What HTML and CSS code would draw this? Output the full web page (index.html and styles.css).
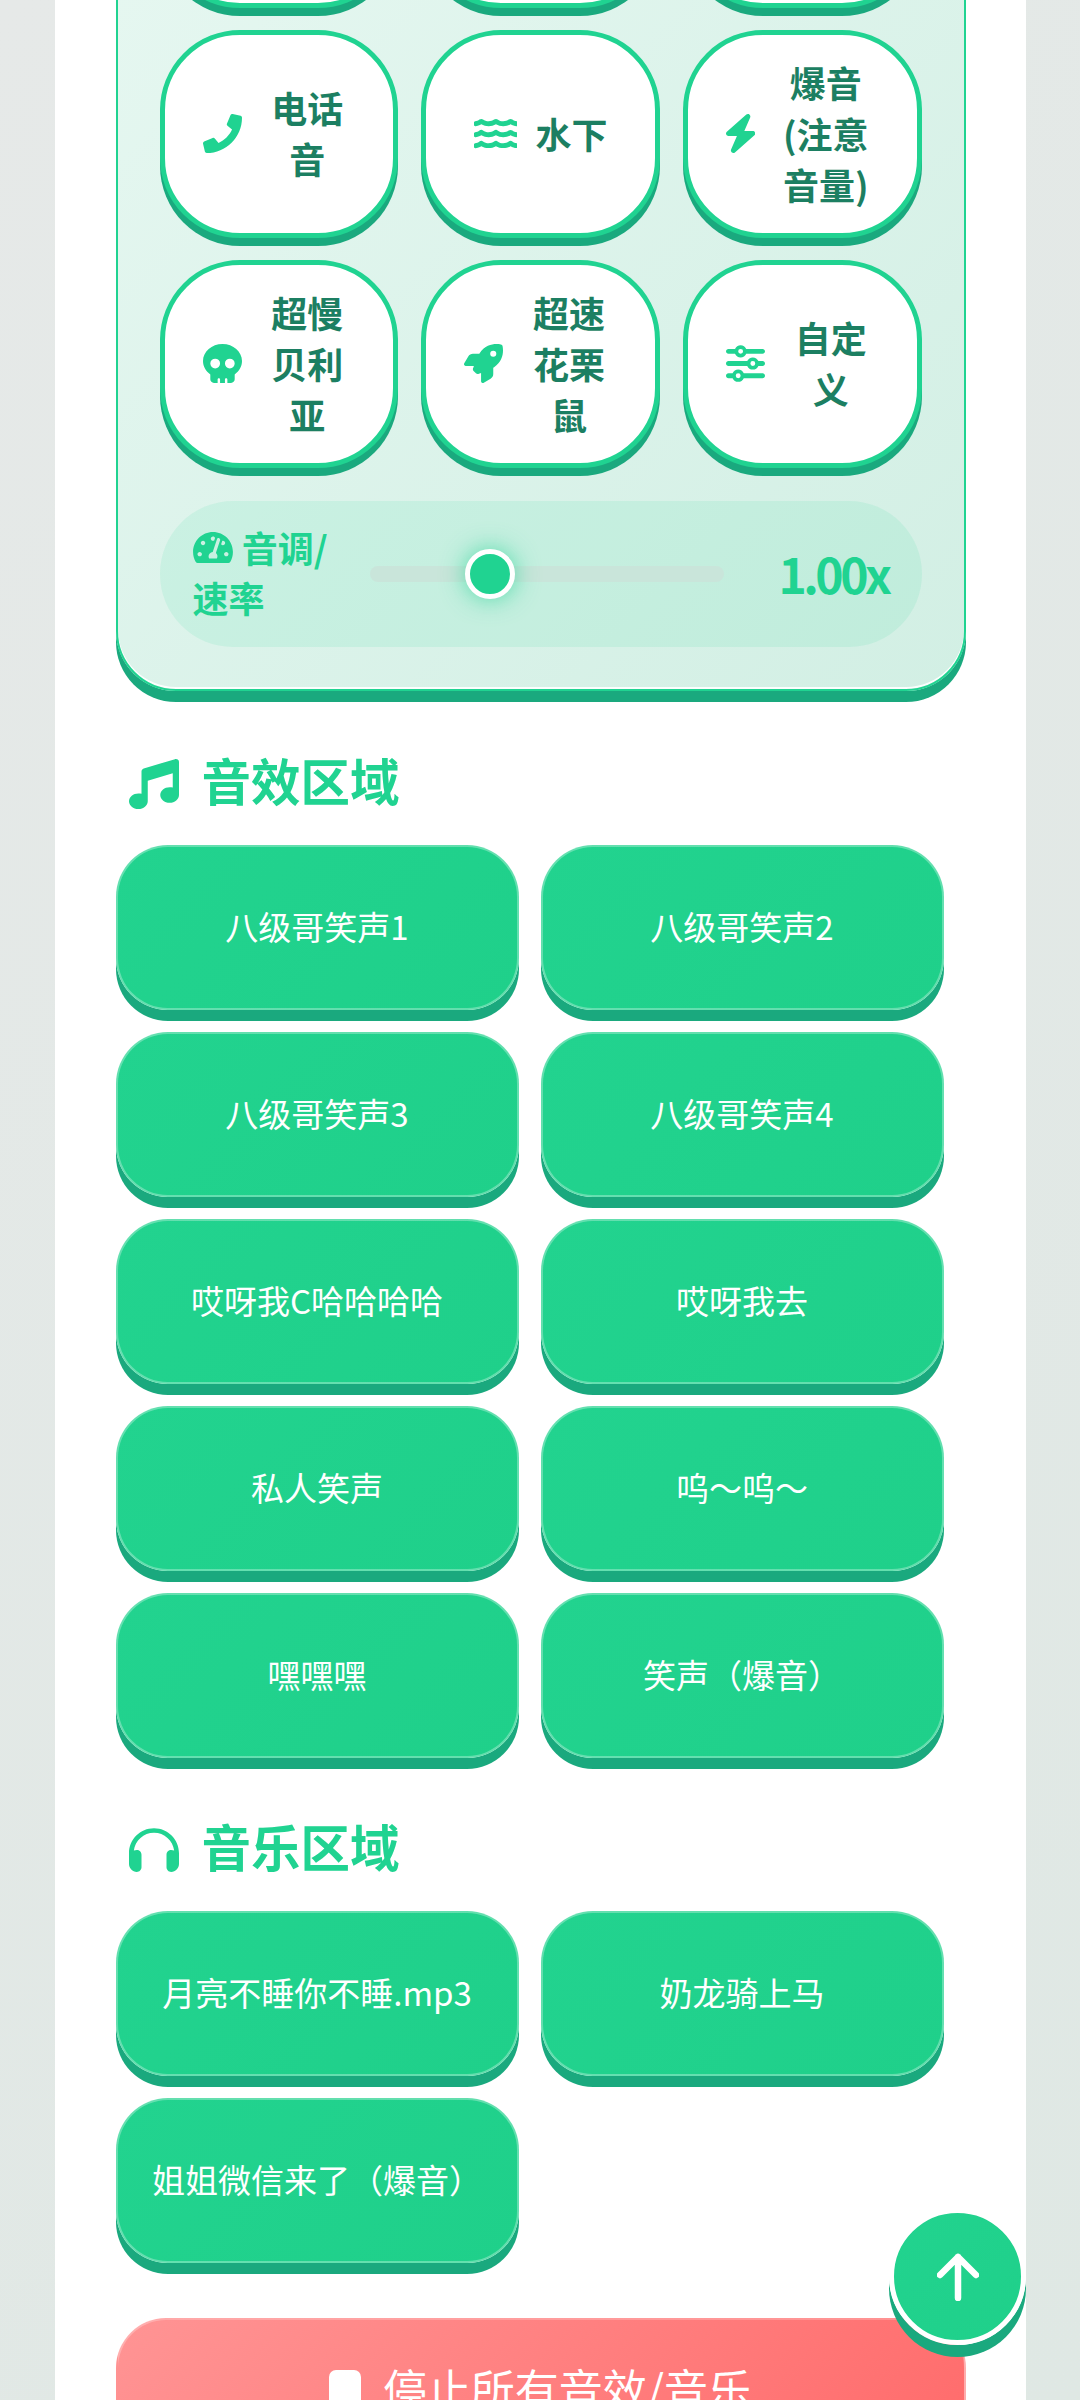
FILE: index.html
```html
<!DOCTYPE html>
<html lang="zh">
<head>
  <meta charset="UTF-8">
  <title>音效板</title>
  <meta name="viewport" content="width=device-width, initial-scale=1.0">
  <link rel="stylesheet" href="styles.css">
</head>
<body>
  <div class="container">
    <!-- 变声面板 -->
    <div class="voice-panel">
      <div class="voice-grid">
        <button class="voice-btn"></button>
        <button class="voice-btn"></button>
        <button class="voice-btn"></button>

        <button class="voice-btn">
          <svg class="voice-icon" viewBox="0 0 512 512"><path d="M493.4 24.6l-104-24c-11.3-2.6-22.9 3.3-27.5 13.9l-48 112c-4.2 9.8-1.4 21.3 6.9 28l60.6 49.6c-36 76.7-98.9 140.5-177.2 177.2l-49.6-60.6c-6.8-8.3-18.2-11.1-28-6.9l-112 48C3.9 366.5-2 378.1.6 389.4l24 104C27.1 504.2 36.7 512 48 512c256.1 0 464-207.5 464-464 0-11.2-7.7-20.9-18.6-23.4z"/></svg>
          <span>电话音</span>
        </button>
        <button class="voice-btn">
          <svg class="voice-icon" viewBox="0 0 576 512"><path d="M562.1 383.9c-21.5-2.4-42.1-10.5-57.9-22.9-14.1-11.1-34.2-11.3-48.2 0-37.9 30.4-107.2 30.4-145.7-1.5-13.5-11.2-33-9.1-46.7 1.8-38 30.1-106.9 30-145.2-1.7-13.5-11.2-33.3-8.9-47.1 2-15.5 12.2-36 20.1-57.7 22.4-7.9.8-13.6 7.9-13.6 15.8v32.2c0 9.1 7.6 16.8 16.7 16 28.8-2.5 56.1-11.4 79.4-25.9 56.5 34.6 137 34.1 192 0 56.5 34.6 137 34.1 192 0 23.3 14.2 50.9 23.3 79.1 25.8 9.1.8 16.7-6.9 16.7-16v-31.6c.1-8-5.7-15.4-13.8-16.3zM562.1 239.9c-21.5-2.4-42.1-10.5-57.9-22.9-14.1-11.1-34.2-11.3-48.2 0-37.9 30.4-107.2 30.4-145.7-1.5-13.5-11.2-33-9.1-46.7 1.8-38 30.1-106.9 30-145.2-1.7-13.5-11.2-33.3-8.9-47.1 2-15.5 12.2-36 20.1-57.7 22.4-7.9.8-13.6 7.9-13.6 15.8v32.2c0 9.1 7.6 16.8 16.7 16 28.8-2.5 56.1-11.4 79.4-25.9 56.5 34.6 137 34.1 192 0 56.5 34.6 137 34.1 192 0 23.3 14.2 50.9 23.3 79.1 25.8 9.1.8 16.7-6.9 16.7-16v-31.6c.1-8-5.7-15.4-13.8-16.3zM562.1 95.9c-21.5-2.4-42.1-10.5-57.9-22.9-14.1-11.1-34.2-11.3-48.2 0-37.9 30.4-107.2 30.4-145.7-1.5-13.5-11.2-33-9.1-46.7 1.8-38 30.1-106.9 30-145.2-1.7-13.5-11.2-33.3-8.9-47.1 2-15.5 12.2-36 20.1-57.7 22.4-7.9.8-13.6 7.9-13.6 15.8v32.2c0 9.1 7.6 16.8 16.7 16 28.8-2.5 56.1-11.4 79.4-25.9 56.5 34.6 137 34.1 192 0 56.5 34.6 137 34.1 192 0 23.3 14.2 50.9 23.3 79.1 25.8 9.1.8 16.7-6.9 16.7-16v-31.6c.1-8-5.7-15.4-13.8-16.3z"/></svg>
          <span>水下</span>
        </button>
        <button class="voice-btn">
          <svg class="voice-icon" viewBox="32 0 384 512"><path d="M349.4 44.6c5.9-13.7 1.5-29.7-10.6-38.5s-28.6-8-39.9 1.8l-256 224c-10 8.8-13.6 22.9-8.9 35.3S50.7 288 64 288H175.5L98.6 467.4c-5.9 13.7-1.5 29.7 10.6 38.5s28.6 8 39.9-1.8l256-224c10-8.8 13.6-22.9 8.9-35.3s-16.6-20.7-30-20.7H272.5L349.4 44.6z"/></svg>
          <span>爆音(注意音量)</span>
        </button>

        <button class="voice-btn">
          <svg class="voice-icon" viewBox="0 0 512 512"><path d="M416 398.9c58.5-41.1 96-104.1 96-174.9C512 100.3 397.4 0 256 0S0 100.3 0 224c0 70.7 37.5 133.8 96 174.9c0 .4 0 .7 0 1.1v64c0 26.5 21.5 48 48 48h48V464c0-8.8 7.2-16 16-16s16 7.2 16 16v48h64V464c0-8.8 7.2-16 16-16s16 7.2 16 16v48h48c26.5 0 48-21.5 48-48V400c0-.4 0-.7 0-1.1zM96 256a64 64 0 1 1 128 0A64 64 0 1 1 96 256zm256-64a64 64 0 1 1 0 128 64 64 0 1 1 0-128z"/></svg>
          <span>超慢贝利亚</span>
        </button>
        <button class="voice-btn">
          <svg class="voice-icon" viewBox="0 0 512 512"><path d="M156.6 384.9L125.7 354c-8.5-8.5-11.5-20.8-7.7-32.2c3-8.9 7-20.5 11.8-33.8L24 288c-8.6 0-16.6-4.6-20.9-12.1s-4.2-16.7 .2-24.1l52.5-88.5c13-21.9 36.5-35.3 61.9-35.3l82.3 0c2.4-4 4.8-7.7 7.2-11.3C289.1-4.1 411.1-8.1 483.9 5.3c11.6 2.1 20.6 11.2 22.8 22.8c13.4 72.9 9.3 194.8-111.4 276.7c-3.5 2.4-7.3 4.8-11.3 7.2v82.3c0 25.4-13.4 49-35.3 61.9l-88.5 52.5c-7.4 4.4-16.6 4.5-24.1 .2s-12.1-12.2-12.1-20.9V380.8c-14.1 4.9-26.4 8.9-35.7 11.9c-11.2 3.6-23.4 .5-31.8-7.8zM384 168a40 40 0 1 0 0-80 40 40 0 1 0 0 80z"/></svg>
          <span>超速花栗鼠</span>
        </button>
        <button class="voice-btn">
          <svg class="voice-icon" viewBox="0 0 512 512"><path d="M0 416c0 17.7 14.3 32 32 32l54.7 0c12.3 28.3 40.5 48 73.3 48s61-19.7 73.3-48L480 448c17.7 0 32-14.3 32-32s-14.3-32-32-32l-246.7 0c-12.3-28.3-40.5-48-73.3-48s-61 19.7-73.3 48L32 384c-17.7 0-32 14.3-32 32zm128 0a32 32 0 1 1 64 0 32 32 0 1 1 -64 0zM320 256a32 32 0 1 1 64 0 32 32 0 1 1 -64 0zm32-80c-32.8 0-61 19.7-73.3 48L32 224c-17.7 0-32 14.3-32 32s14.3 32 32 32l246.7 0c12.3 28.3 40.5 48 73.3 48s61-19.7 73.3-48l54.7 0c17.7 0 32-14.3 32-32s-14.3-32-32-32l-54.7 0c-12.3-28.3-40.5-48-73.3-48zM192 128a32 32 0 1 1 0-64 32 32 0 1 1 0 64zm73.3-64C253 35.7 224.8 16 192 16s-61 19.7-73.3 48L32 64C14.3 64 0 78.3 0 96s14.3 32 32 32l86.7 0c12.3 28.3 40.5 48 73.3 48s61-19.7 73.3-48L480 128c17.7 0 32-14.3 32-32s-14.3-32-32-32L265.3 64z"/></svg>
          <span>自定义</span>
        </button>
      </div>

      <!-- 音调滑块 -->
      <div class="pitch-row">
        <div class="pitch-label">
          <svg class="pitch-icon" viewBox="0 32 576 448"><path d="M288 32C128.94 32 0 160.94 0 320c0 52.8 14.25 102.26 39.06 144.8 5.61 9.62 16.3 15.2 27.44 15.2h443c11.14 0 21.83-5.58 27.44-15.2C561.75 422.26 576 372.8 576 320c0-159.06-128.94-288-288-288zm0 64c14.71 0 26.58 10.13 30.32 23.65-1.11 2.26-2.64 4.23-3.45 6.67l-9.22 27.67c-5.13 3.49-10.97 6.01-17.64 6.01-17.67 0-32-14.33-32-32S270.33 96 288 96zM96 384c-17.67 0-32-14.33-32-32s14.33-32 32-32 32 14.33 32 32-14.33 32-32 32zm48-160c-17.67 0-32-14.33-32-32s14.33-32 32-32 32 14.33 32 32-14.33 32-32 32zm246.77-72.41l-61.33 184C343.13 347.33 352 364.54 352 384c0 11.72-3.38 22.55-8.88 32H232.88c-5.5-9.45-8.88-20.28-8.88-32 0-33.94 26.5-61.43 59.9-63.59l61.34-184.01c4.17-12.56 17.73-19.45 30.36-15.17 12.57 4.19 19.35 17.79 15.17 30.36zm14.66 57.2l15.52-46.55c3.47-1.29 7.13-2.23 11.05-2.23 17.67 0 32 14.33 32 32s-14.33 32-32 32c-11.38-.01-20.89-6.28-26.57-15.22zM480 384c-17.67 0-32-14.33-32-32s14.33-32 32-32 32 14.33 32 32-14.33 32-32 32z"/></svg>
          音调/速率
        </div>
        <div class="pitch-track">
          <div class="pitch-thumb" style="left: 34%"></div>
        </div>
        <div class="pitch-value">1.00x</div>
      </div>
    </div>

    <h2 class="section-title">
      <svg viewBox="0 0 512 512"><path d="M499.1 6.3c8.1 6 12.9 15.6 12.9 25.7v72V368c0 44.2-43 80-96 80s-96-35.8-96-80s43-80 96-80c11.2 0 22 1.6 32 4.6V147L192 223.8V432c0 44.2-43 80-96 80s-96-35.8-96-80s43-80 96-80c11.2 0 22 1.6 32 4.6V200 128c0-14.1 9.3-26.6 22.8-30.7l320-96c9.7-2.9 20.2-1.1 28.3 5z"/></svg>
      音效区域
    </h2>
    <div class="sound-grid">
      <button class="sound-btn">八级哥笑声1</button>
      <button class="sound-btn">八级哥笑声2</button>
      <button class="sound-btn">八级哥笑声3</button>
      <button class="sound-btn">八级哥笑声4</button>
      <button class="sound-btn">哎呀我C哈哈哈哈</button>
      <button class="sound-btn">哎呀我去</button>
      <button class="sound-btn">私人笑声</button>
      <button class="sound-btn">呜～呜～</button>
      <button class="sound-btn">嘿嘿嘿</button>
      <button class="sound-btn">笑声（爆音）</button>
    </div>

    <h2 class="section-title music-title">
      <svg viewBox="0 0 512 512"><path d="M256 80C149.9 80 62.4 159.4 49.6 262c9.4-3.8 19.6-6 30.4-6c26.5 0 48 21.5 48 48V432c0 26.5-21.5 48-48 48c-44.2 0-80-35.8-80-80V384 336 288C0 146.6 114.6 32 256 32s256 114.6 256 256v48 48 16c0 44.2-35.8 80-80 80c-26.5 0-48-21.5-48-48V304c0-26.5 21.5-48 48-48c10.8 0 21 2.2 30.4 6C449.6 159.4 362.1 80 256 80z"/></svg>
      音乐区域
    </h2>
    <div class="sound-grid">
      <button class="sound-btn">月亮不睡你不睡.mp3</button>
      <button class="sound-btn">奶龙骑上马</button>
      <button class="sound-btn">姐姐微信来了（爆音）</button>
    </div>

    <button class="stop-btn">
      <span class="stop-icon"></span>
      停止所有音效/音乐
    </button>
  </div>

  <!-- 回到顶部 -->
  <button class="top-btn">
    <svg viewBox="0 0 42 48"><path d="M21 45V4M3 22L21 4L39 22" fill="none" stroke="#fff" stroke-width="6.5" stroke-linecap="round" stroke-linejoin="round"/></svg>
  </button>
</body>
</html>
```

FILE: styles.css
```css
* {
  box-sizing: border-box;
}
html, body {
  height: 2400px;
}
body {
  margin: 0;
  overflow: hidden;
  font-family: "Noto Sans CJK SC", "Noto Sans", sans-serif;
  background: linear-gradient(135deg, #e6e9e8, #dfe8e4);
}
button {
  font-family: inherit;
  cursor: pointer;
  outline: none;
}
.container {
  width: 971px;
  height: 2644px;
  margin: -244px auto 0;
  padding: 0 60px 0 61px;
  background: white;
}
.voice-panel {
  padding: 42px 42px 42px;
  background: linear-gradient(135deg, #e8f8f2, #d2efe4);
  border: 2px solid #20d391;
  border-radius: 60px;
  box-shadow: inset 0 -2px 0 rgba(255,255,255,0.9), 0 11px 0 #1aa97e;
}
.voice-grid {
  display: grid;
  grid-template-columns: repeat(3, 1fr);
  gap: 22px 23px;
}
.voice-btn {
  display: flex;
  align-items: center;
  justify-content: center;
  gap: 18px;
  min-height: 208px;
  padding: 21px 38px 23px;
  background: white;
  border: 5px solid #20d391;
  border-radius: 80px;
  box-shadow: 0 8px 0 #1aa97e;
  color: #1c7f62;
  font-size: 36px;
  font-weight: 700;
  line-height: 51px;
  text-align: center;
}
.voice-icon {
  flex: none;
  height: 39px;
  fill: #20d391;
}
.pitch-row {
  display: flex;
  align-items: center;
  height: 146px;
  margin-top: 33px;
  padding: 0 32px;
  background: rgba(32,211,145,0.1);
  border-radius: 73px;
}
.pitch-label {
  flex: none;
  width: 165px;
  margin: 0 12px 4px 1px;
  color: #20d391;
  font-size: 36px;
  font-weight: 700;
  line-height: 50px;
}
.pitch-icon {
  width: 40px;
  height: 31px;
  margin-right: 1px;
  fill: #20d391;
}
.pitch-track {
  position: relative;
  flex: none;
  width: 354px;
  height: 16px;
  background: #c9e5da;
  border-radius: 8px;
}
.pitch-thumb {
  position: absolute;
  top: 8px;
  width: 50px;
  height: 50px;
  margin: -25px 0 0 -25px;
  background: #20d391;
  border: 5px solid white;
  border-radius: 50%;
  box-shadow: 0 0 24px rgba(32,211,145,0.7);
}
.pitch-value {
  flex: 1;
  margin: 0 1px 3px 0;
  color: #20d391;
  font-size: 48px;
  font-weight: 700;
  letter-spacing: -3.5px;
  text-align: right;
}
.section-title {
  display: flex;
  align-items: center;
  gap: 23px;
  height: 60px;
  margin: 58px 0 36px;
  padding-left: 13px;
  color: #20d391;
  font-size: 49.5px;
  font-weight: 700;
}
.music-title {
  margin-top: 57px;
}
.section-title svg {
  width: 50px;
  height: 50px;
  margin-top: 10px;
  fill: #20d391;
}
.sound-grid {
  display: grid;
  grid-template-columns: repeat(2, 403px);
  gap: 22px;
}
.sound-btn {
  height: 165px;
  padding: 0 0 3px;
  background: linear-gradient(135deg, #22d38f, #1fd08a);
  border: 2px solid rgba(255,255,255,0.3);
  border-radius: 52px;
  box-shadow: 0 11px 0 #1aa97e;
  color: white;
  font-size: 33px;
}
.stop-btn {
  display: flex;
  align-items: center;
  justify-content: center;
  gap: 22px;
  width: 100%;
  height: 140px;
  margin-top: 55px;
  background: linear-gradient(135deg, #ff9494, #ff6b6b);
  border: 2px solid rgba(255,255,255,0.25);
  border-radius: 50px;
  color: white;
  font-size: 44px;
}
.stop-icon {
  width: 32px;
  height: 36px;
  background: white;
  border-radius: 7px;
}
.top-btn {
  position: fixed;
  right: 54px;
  bottom: 55px;
  display: flex;
  align-items: center;
  justify-content: center;
  width: 137px;
  height: 137px;
  padding: 0;
  background: linear-gradient(135deg, #22d38f, #1fd08a);
  border: 5px solid white;
  border-radius: 50%;
  box-shadow: 0 12px 0 #1aa97e;
}
.top-btn svg {
  width: 42px;
  height: 48px;
}
```
